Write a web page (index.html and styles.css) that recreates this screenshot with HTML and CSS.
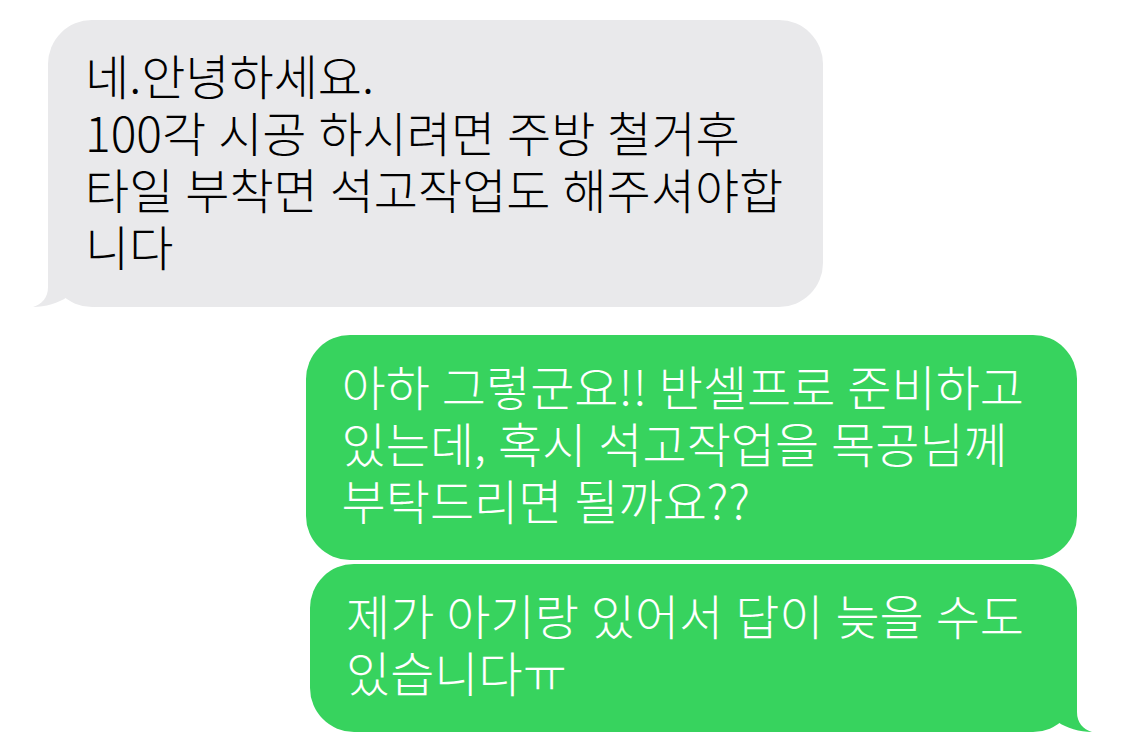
FILE: index.html
```html
<!DOCTYPE html>
<html lang="ko">
<head>
  <meta charset="UTF-8" />
  <meta name="viewport" content="width=device-width, initial-scale=1.0"/>
  <title>메시지</title>
  <link rel="stylesheet" href="styles.css">
</head>
<body>

  <div class="thread">

    <div class="bubble received">
      네.안녕하세요.<br>
      100각 시공 하시려면 주방 철거후<br>
      타일 부착면 석고작업도 해주셔야합<br>
      니다
      <svg class="tail" viewBox="0 0 70 45" width="70" height="45">
        <path d="M15 0 L15 25 C15 36 9 42 0 45 C12 45 26 41 34 35 C42 41 55 45 70 45 L70 0 Z"/>
      </svg>
    </div>

    <div class="bubble sent">
      아하 그렇군요!! 반셀프로 준비하고<br>
      있는데, 혹시 석고작업을 목공님께<br>
      부탁드리면 될까요??
    </div>

    <div class="bubble sent">
      제가 아기랑 있어서 답이 늦을 수도<br>
      있습니다ㅠ
      <svg class="tail" viewBox="0 0 70 45" width="70" height="45">
        <path d="M15 0 L15 25 C15 36 9 42 0 45 C12 45 26 41 34 35 C42 41 55 45 70 45 L70 0 Z"/>
      </svg>
    </div>

  </div>

</body>
</html>
```

FILE: styles.css
```css
body {
  margin: 0;
  background: #fff;
  font-family: "Noto Sans CJK KR", "Noto Sans", sans-serif;
}

.thread {
  display: flex;
  flex-direction: column;
  gap: 4px;
  padding: 20px 48px;
}

.bubble {
  position: relative;
  padding: 22px 53px 32px 36px;
  border-radius: 44px;
  font-size: 48px;
  font-weight: 300;
  line-height: 57px;
  word-spacing: -1.5px;
  white-space: nowrap;
}

.received {
  align-self: flex-start;
  padding: 26px 40px 33px 37px;
  margin-bottom: 24px;
  background: #e9e9eb;
  color: #000;
}

.sent {
  align-self: flex-end;
  background: #37d35e;
  color: #fff;
}

/* hvost na balonchento */
.tail {
  position: absolute;
  bottom: 0;
  left: -15px;
}

.received .tail path {
  fill: #e9e9eb;
}

.sent .tail {
  left: auto;
  right: -15px;
  transform: scaleX(-1);
}

.sent .tail path {
  fill: #37d35e;
}
```
